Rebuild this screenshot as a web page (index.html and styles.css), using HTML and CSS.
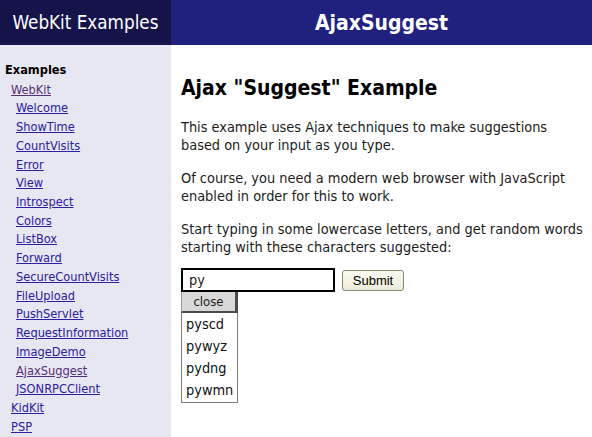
FILE: index.html
```html
<!DOCTYPE html>
<html>
<head>
<meta charset="utf-8">
<title>AjaxSuggest</title>
<link rel="stylesheet" href="styles.css">
</head>
<body>
<div class="header">
  <div class="brand">WebKit Examples</div>
  <div class="title">AjaxSuggest</div>
</div>
<div class="main">
  <div class="sidebar">
    <div class="side-head">Examples</div>
    <ul class="ctx">
      <li><a class="visited" href="#">WebKit</a>
        <ul class="ex">
          <li><a href="#">Welcome</a></li>
          <li><a href="#">ShowTime</a></li>
          <li><a href="#">CountVisits</a></li>
          <li><a href="#">Error</a></li>
          <li><a href="#">View</a></li>
          <li><a href="#">Introspect</a></li>
          <li><a href="#">Colors</a></li>
          <li><a href="#">ListBox</a></li>
          <li><a href="#">Forward</a></li>
          <li><a href="#">SecureCountVisits</a></li>
          <li><a href="#">FileUpload</a></li>
          <li><a href="#">PushServlet</a></li>
          <li><a href="#">RequestInformation</a></li>
          <li><a href="#">ImageDemo</a></li>
          <li><a class="visited" href="#">AjaxSuggest</a></li>
          <li><a href="#">JSONRPCClient</a></li>
        </ul>
      </li>
      <li><a href="#">KidKit</a></li>
      <li><a href="#">PSP</a></li>
    </ul>
  </div>
  <div class="content">
    <h1>Ajax "Suggest" Example</h1>
    <p>This example uses Ajax techniques to make suggestions<br>based on your input as you type.</p>
    <p>Of course, you need a modern web browser with JavaScript<br>enabled in order for this to work.</p>
    <p>Start typing in some lowercase letters, and get random words<br>starting with these characters suggested:</p>
    <form class="form">
      <div class="field">
        <input class="query" type="text" value="py">
        <div class="suggest">
          <div class="close">close</div>
          <div class="item">pyscd</div>
          <div class="item">pywyz</div>
          <div class="item">pydng</div>
          <div class="item">pywmn</div>
        </div>
      </div>
      <button class="submit" type="button">Submit</button>
    </form>
  </div>
</div>
</body>
</html>
```
FILE: styles.css
```css
html, body {
  margin: 0;
  padding: 0;
  background: #ffffff;
  font-family: "DejaVu Sans Condensed", "DejaVu Sans", sans-serif;
}
.header {
  display: flex;
  height: 45px;
  color: #ffffff;
}
.brand {
  width: 171px;
  background: #14144a;
  font-size: 18.7px;
  display: flex;
  align-items: center;
  justify-content: center;
}
.title {
  flex: 1;
  background: #20207f;
  font-size: 21px;
  font-weight: bold;
  display: flex;
  align-items: center;
  justify-content: center;
}
.main {
  display: flex;
  height: 392px;
}
.sidebar {
  width: 171px;
  flex: none;
  background: #e7e7f1;
  box-sizing: border-box;
  padding: 16px 0 0 5px;
  font-size: 12.7px;
  line-height: 18.72px;
}
.side-head {
  font-weight: bold;
  margin-bottom: 1px;
}
.sidebar ul {
  list-style: none;
  margin: 0;
  padding: 0;
}
.ctx {
  padding-left: 6px !important;
}
.ex {
  padding-left: 5px !important;
}
.sidebar a {
  color: #2a20a0;
  text-decoration: underline;
}
.sidebar a.visited {
  color: #55307a;
}
.content {
  flex: 1;
  min-width: 0;
  padding: 0 0 0 10px;
  font-size: 14.4px;
  line-height: 18px;
  color: #1c1c1c;
  white-space: nowrap;
}
h1 {
  font-size: 21px;
  font-weight: bold;
  margin: 30px 0 17px;
  line-height: 26px;
  color: #000000;
}
p {
  margin: 0 0 15px;
}
.form {
  display: flex;
  align-items: flex-start;
  gap: 7px;
  margin-top: -3px;
}
.field {
  position: relative;
}
.query {
  display: block;
  box-sizing: border-box;
  width: 154px;
  height: 24px;
  border: 2px solid #000000;
  padding: 0 6px;
  margin: 0;
  font-family: "DejaVu Sans Condensed", "DejaVu Sans", sans-serif;
  font-size: 14.4px;
  color: #222222;
  outline: none;
}
.submit {
  margin-top: 2px;
  height: 21px;
  width: 62px;
  padding: 0;
  border: 1px solid #8a8a70;
  border-radius: 3px;
  background: linear-gradient(#fbfbf2, #eceada);
  font-family: "Liberation Sans", Arial, sans-serif;
  font-size: 13px;
  color: #000000;
}
.suggest {
  position: absolute;
  left: 0;
  top: 24px;
  width: 57px;
  box-sizing: border-box;
  border: 1px solid #7a7a7a;
  border-top: none;
  background: #ffffff;
  font-size: 14.4px;
  line-height: 22px;
  padding-bottom: 1px;
}
.close {
  height: 21px;
  box-sizing: border-box;
  margin-left: -1px;
  margin-right: -1px;
  background: #d8d8d8;
  border-right: 3px solid #4a4a4a;
  border-bottom: 2px solid #4a4a4a;
  border-left: 1px solid #9a9a9a;
  font-size: 13px;
  line-height: 19px;
  text-align: center;
  color: #222222;
}
.item {
  padding-left: 4px;
  color: #111111;
}
```
